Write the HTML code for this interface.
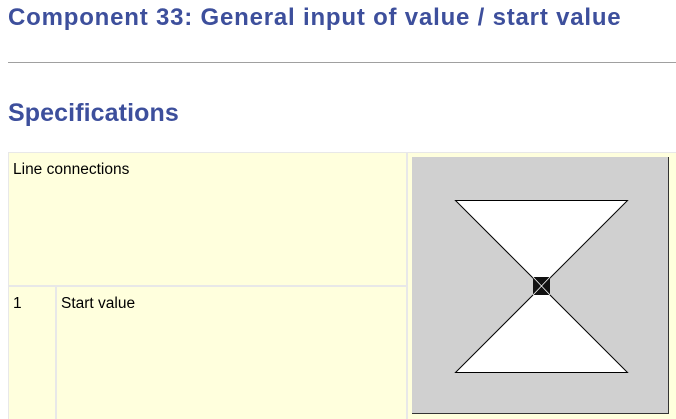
<!DOCTYPE html>
<html><head><meta charset="utf-8"><style>
body{margin:0;width:676px;height:419px;background:#fff;position:relative;overflow:hidden;font-family:"Liberation Sans",sans-serif;}
.t{position:absolute;left:8px;color:#3d4f9c;font-weight:bold;white-space:nowrap;}
#h1{top:4px;font-size:24px;letter-spacing:0.8px;}
#h2{top:99px;font-size:25px;letter-spacing:0.1px;}
#hr{position:absolute;left:8px;top:62px;width:668px;height:1px;background:#a0a0a0;}
.cell{position:absolute;background:#ffffdd;font-size:15.5px;color:#000;box-sizing:border-box;}
</style></head><body>
<div class="t" id="h1">Component 33: General input of value / start value</div>
<div id="hr"></div>
<div class="t" id="h2">Specifications</div>
<div style="position:absolute;left:8px;top:152px;width:668px;height:267px;background:#e8e8e8;"></div>
<div class="cell" style="left:9px;top:153px;width:397px;height:132px;padding:8px 0 0 4px;">Line connections</div>
<div class="cell" style="left:9px;top:287px;width:46px;height:132px;padding:8px 0 0 4px;">1</div>
<div class="cell" style="left:57px;top:287px;width:349px;height:132px;padding:8px 0 0 4px;">Start value</div>
<div class="cell" style="left:408px;top:153px;width:268px;height:266px;"></div>
<svg style="position:absolute;left:0;top:0" width="676" height="419">
<rect x="412" y="157" width="256" height="256" fill="#d0d0d0"/>
<line x1="668.5" y1="157" x2="668.5" y2="414" stroke="#333"/>
<line x1="412" y1="413.5" x2="669" y2="413.5" stroke="#333"/>
<polygon points="455.5,200.5 627.5,200.5 541.5,286.5" fill="#fff" stroke="#000"/>
<polygon points="455.5,372.5 627.5,372.5 541.5,286.5" fill="#fff" stroke="#000"/>
<rect x="533" y="277" width="17" height="18" fill="#111"/>
<line x1="533" y1="277" x2="550" y2="295" stroke="#fff" stroke-width="0.8"/>
<line x1="550" y1="277" x2="533" y2="295" stroke="#fff" stroke-width="0.8"/>
</svg>
</body></html>
